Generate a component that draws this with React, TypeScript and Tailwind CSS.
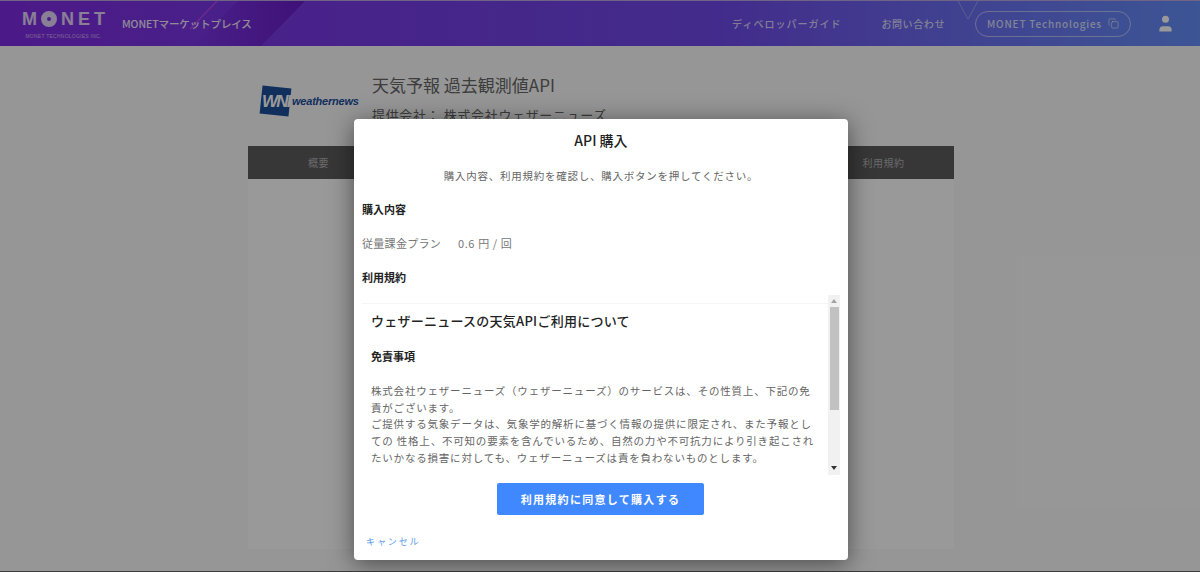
import { Copy, User } from 'lucide-react';

const TABS = ['概要', 'API仕様', '料金', 'サンプル', '利用規約'];

function MonetLogo() {
    return (
        <div className="flex flex-col items-center w-[83px] ml-[22px] -mt-[1px]">
            <div className="flex items-center justify-between w-full h-[22px] text-[18px] leading-none font-bold text-white/80 font-['Liberation_Sans',sans-serif]">
                <span>M</span>
                <span className="w-[16px] h-[16px] rounded-full border-[6px] border-white/80" />
                <span>N</span>
                <span>E</span>
                <span>T</span>
            </div>
            <span className="mt-[4px] text-[5px] leading-none tracking-[0.05em] text-white/60 whitespace-nowrap font-['Liberation_Sans',sans-serif]">MONET TECHNOLOGIES INC.</span>
        </div>
    );
}

function WeathernewsLogo() {
    return (
        <div className="w-[103px] h-[38px] ml-[9px] flex items-center pl-[4px] shrink-0">
            <div className="w-[29px] h-[28px] rotate-[6deg] bg-[#1c4f9c] flex items-center justify-center mr-[2px] shrink-0">
                <span className="text-white text-[17px] italic font-bold leading-none tracking-[-0.1em] -rotate-[6deg] font-['Liberation_Sans',sans-serif]">WNI</span>
            </div>
            <span className="text-[#1c4f9c] text-[11px] italic font-bold tracking-[-0.02em] font-['Liberation_Sans',sans-serif]">weathernews</span>
        </div>
    );
}

export default function App() {
    return (
        <div className="relative h-[572px] overflow-hidden flex flex-col bg-[#fbfbfb] font-['Noto_Sans_CJK_JP','Noto_Sans',sans-serif] text-[#333]">
            {/* Header */}
            <header className="relative h-[46px] shrink-0 flex items-center overflow-hidden border-t border-[#b9a6e0] bg-gradient-to-r from-[#7f2be3] via-[#6f49e9] via-60% to-[#648ef8] text-white">
                <svg className="absolute left-[180px] top-0 h-[46px] w-[180px]" viewBox="0 0 180 46" fill="none">
                    <defs>
                        <linearGradient id="band" x1="0" y1="0" x2="1" y2="0">
                            <stop offset="0" stopColor="#6a1cc8" stopOpacity="0" />
                            <stop offset="1" stopColor="#6a1cc8" />
                        </linearGradient>
                    </defs>
                    <path d="M10 46 L58 0 H125 L80 46 Z" fill="url(#band)" />
                    <path d="M10 28 L37 0" stroke="#b548e8" strokeWidth="1.5" />
                </svg>
                <svg className="absolute left-[955px] top-0 h-[22px] w-[30px]" viewBox="0 0 30 22" fill="none">
                    <path d="M3 0 L13 18 L23 0" stroke="#ffffff" strokeOpacity="0.3" />
                </svg>
                <MonetLogo />
                <span className="relative ml-[17px] text-[10.5px] font-medium tracking-[-0.01em] text-white/90">MONETマーケットプレイス</span>
                <nav className="relative ml-auto flex items-center text-[10px] font-medium text-white/75">
                    <span className="tracking-[0.1em]">ディベロッパーガイド</span>
                    <span className="ml-[40px] tracking-[0.06em]">お問い合わせ</span>
                    <span className="ml-[30px] h-[26px] w-[156px] rounded-full border border-white/50 flex items-center justify-center gap-[6px] tracking-[0.08em]">
                        MONET Technologies
                        <Copy size={11} strokeWidth={1.5} />
                    </span>
                </nav>
                <User size={21} className="relative ml-[24px] mr-[24px]" fill="currentColor" strokeWidth={0} color="#e6e6e6" />
            </header>

            {/* Page behind the dialog */}
            <main className="flex-1 flex flex-col ml-[248px] w-[706px] pt-[36px] pb-[22px]">
                <div className="flex items-start h-[65px]">
                    <WeathernewsLogo />
                    <div className="ml-[12px] -mt-[9px]">
                        <h1 className="text-[17px] leading-[24px] text-[#666]">天気予報 過去観測値API</h1>
                        <p className="mt-[8px] text-[13px] leading-[20px] tracking-[0.05em] text-[#666]">提供会社： 株式会社ウェザーニューズ</p>
                    </div>
                </div>
                <div className="h-[33px] -mt-[1px] bg-[#5d5d5d] grid grid-cols-5 text-[10px] tracking-[0.05em] text-[#b0b0b0]">
                    {TABS.map(tab => (
                        <div key={tab} className="flex items-center justify-center">{tab}</div>
                    ))}
                </div>
                <div className="flex-1 bg-white" />
            </main>
            <footer className="h-[1px] shrink-0 bg-[#666]" />

            {/* Overlay */}
            <div className="absolute inset-0 bg-black/40" />

            {/* Dialog */}
            <div className="absolute left-[354px] top-[119px] w-[494px] h-[441px] bg-white rounded-[4px] shadow-[0_4px_24px_rgba(0,0,0,0.5)] px-[8px] flex flex-col">
                <h2 className="mt-[11px] h-[20px] text-[14px] leading-[20px] font-medium text-center text-[#222]">API 購入</h2>
                <p className="mt-[18px] h-[16px] text-[10.5px] leading-[16px] tracking-[0.75px] text-center text-[#666]">購入内容、利用規約を確認し、購入ボタンを押してください。</p>
                <h3 className="mt-[17px] h-[16px] text-[11px] leading-[16px] font-bold text-[#222]">購入内容</h3>
                <div className="mt-[18px] h-[16px] flex text-[11px] leading-[16px] tracking-[0.3px] text-[#777]">
                    <span className="w-[96px]">従量課金プラン</span>
                    <span className="tracking-[0.6px]">0.6&nbsp;円&nbsp;/&nbsp;回</span>
                </div>
                <h3 className="mt-[18px] h-[16px] text-[11px] leading-[16px] font-bold text-[#222]">利用規約</h3>

                {/* Terms */}
                <div className="mt-[10px] h-[180px] flex">
                    <div className="flex-1 overflow-hidden pt-[8px]">
                        <div className="border-t border-[#f5f5f5] pl-[9px] pr-[11px]">
                            <h4 className="mt-[7px] h-[20px] text-[13px] leading-[20px] tracking-[0.25px] font-medium text-[#222]">ウェザーニュースの天気APIご利用について</h4>
                            <h5 className="mt-[17px] h-[16px] text-[11px] leading-[16px] font-bold text-[#222]">免責事項</h5>
                            <p className="mt-[19px] text-[10.5px] leading-[16.7px] tracking-[0.8px] text-[#666]">
                                株式会社ウェザーニューズ（ウェザーニューズ）のサービスは、その性質上、下記の免責がございます。<br />
                                ご提供する気象データは、気象学的解析に基づく情報の提供に限定され、また予報としての 性格上、不可知の要素を含んでいるため、自然の力や不可抗力により引き起こされたいかなる損害に対しても、ウェザーニューズは責を負わないものとします。
                            </p>
                        </div>
                    </div>
                    <div className="w-[12px] bg-[#f1f1f1] flex flex-col items-center shrink-0">
                        <svg className="mt-[4px] h-[4px] w-[6px]" viewBox="0 0 6 4"><path d="M3 0 L6 4 H0 Z" fill="#a3a3a3" /></svg>
                        <div className="mt-[4px] h-[103px] w-[9px] bg-[#c1c1c1]" />
                        <svg className="mt-auto mb-[5px] h-[4px] w-[6px]" viewBox="0 0 6 4"><path d="M0 0 H6 L3 4 Z" fill="#333" /></svg>
                    </div>
                </div>

                <button className="mt-[8px] ml-[135px] self-start w-[207px] h-[32px] rounded-[2px] bg-[#3f88ff] text-white text-[11px] font-bold tracking-[1.3px]">利用規約に同意して購入する</button>
                <a className="mt-[19px] ml-[4px] text-[9px] leading-[16px] tracking-[1.9px] text-[#5a9eef]">キャンセル</a>
            </div>
        </div>
    );
}
